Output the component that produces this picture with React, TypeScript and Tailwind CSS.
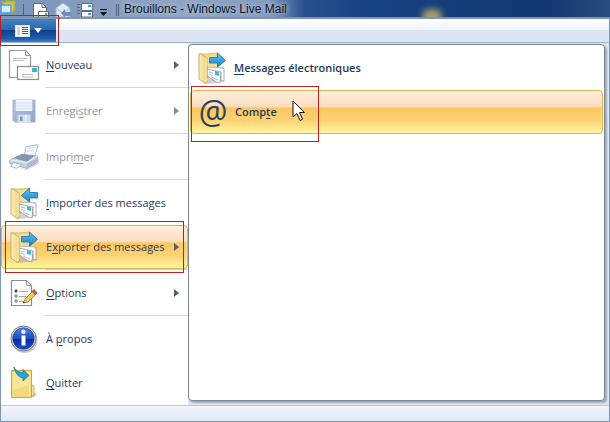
import type { ReactNode } from "react";
import clsx from "clsx";

type IconProps = { className?: string };

const FolderMail = ({ out }: { out?: boolean }) => (
  <svg width="28" height="32" viewBox="0 0 28 32">
    <defs>
      <linearGradient id="folder" x1="0" x2="1">
        <stop offset="0" stopColor="#fcf1c0" />
        <stop offset="1" stopColor="#ecd07a" />
      </linearGradient>
      <linearGradient id="arrow" x1="0" x2="0" y1="0" y2="1">
        <stop offset="0" stopColor="#62c6f6" />
        <stop offset="1" stopColor="#1482cc" />
      </linearGradient>
    </defs>
    <path d="M6 30l5 2 15-3v-3l-10-2z" fill="#9a9a9a" opacity=".45" />
    <path d="M1 2h10l8-1 1 14-10 12z" fill="#f3de92" stroke="#d0ae52" strokeWidth=".8" />
    <path d="M9 15l16 1v8l-16-1z" fill="#fff" stroke="#a3abb2" strokeWidth=".8" />
    <path d="M9 17l14 3-1 11-4-1-9-6z" fill="#fafbfc" stroke="#8f959b" strokeWidth=".8" />
    <path d="M24 16l2 .5V29l-3-.5V20" fill="#fff" stroke="#8f959b" strokeWidth=".8" />
    <path d="M17 19l4 1v4l-4-1z" fill="#48b3d8" />
    <path d="M11 20l4 1M11 22l4 2M13 25l7 3" stroke="#a9b1b8" strokeWidth=".8" />
    <path d="M1 2h2l6 4v25l-2 .5L1 27z" fill="url(#folder)" stroke="#c9a74d" strokeWidth=".9" />
    <path d="M8 6v24" stroke="#fff6cf" />
    {out ? (
      <path d="M11.500 5.500h8V1l8 7.500-8 6.500v-4h-8z" fill="url(#arrow)" stroke="#1f6dab" strokeWidth=".8" />
    ) : (
      <path d="M27.500 5.500h-8V1l-8 7.500 8 6.500v-4h8z" fill="url(#arrow)" stroke="#1f6dab" strokeWidth=".8" />
    )}
  </svg>
);

const NewMail = () => (
  <svg width="32" height="32" viewBox="0 0 32 32">
    <path d="M1.500 1.500h16l5 5v22h-21z" fill="#fff" stroke="#999" strokeWidth="1.200" />
    <path d="M17.500 1.500v5h5z" fill="#eee" stroke="#999" />
    <path d="M5 9.500h14M5 11.500h11" stroke="#bbb" />
    <rect x="9.500" y="17.500" width="21" height="13" fill="#fff" stroke="#8d8d8d" strokeWidth="1.200" />
    <path d="M24 19h5v4h-5z" fill="#40b1cb" />
    <path d="M14 25.500h11M14 28h11" stroke="#bbb" />
  </svg>
);

const Floppy = () => (
  <svg width="24" height="24" viewBox="0 0 26 26">
    <defs>
      <linearGradient id="disk" x1="0" x2="1" y1="0" y2="1">
        <stop offset="0" stopColor="#b3c0d8" />
        <stop offset="1" stopColor="#95a6c5" />
      </linearGradient>
    </defs>
    <path d="M1 1h24v24H3l-2-2z" fill="url(#disk)" stroke="#a0aecb" strokeWidth=".8" />
    <path d="M4 1h18v12H4z" fill="#edf4fc" />
    <path d="M4 4.500h18M4 7.500h18M4 10.500h18" stroke="#d2dff0" />
    <path d="M6 17h14v8H6z" fill="#cfdbee" />
    <path d="M8 18.500h4v6H8z" fill="#8797b7" stroke="#eef3fa" strokeWidth=".8" />
    <path d="M14 17h2v8h-2z" fill="#e9f0fa" />
  </svg>
);

const Printer = () => (
  <svg width="32" height="28" viewBox="0 0 34 28">
    <path d="M3 22l15 5 14-8v3l-13 6z" fill="#b0b6be" opacity=".5" />
    <path d="M17 13l2-10 13-2-4 14z" fill="#f2f7fd" stroke="#9aaccb" strokeWidth=".8" />
    <path d="M21 5l8-1.500M20 8l8-1.500" stroke="#cbd8e9" strokeWidth=".8" />
    <path d="M2 17l13-6 16 2 1 6-12 7-7-2-11-3z" fill="#c7d2e3" stroke="#8f9db9" strokeWidth=".9" />
    <path d="M6 15l9-4 13 2-8 6z" fill="#8694ae" />
    <path d="M2 17l18 3 11-7" fill="none" stroke="#eff5fd" />
    <path d="M6 20l9 2-6 4-6-2z" fill="#f7faff" stroke="#98a8c4" strokeWidth=".8" />
    <path d="M20 21v4l12-6v-4z" fill="#aab9d1" />
  </svg>
);

const OptionsIcon = () => (
  <svg width="30" height="28" viewBox="0 0 30 28">
    <path d="M2.500 1.500h15l5 5v20h-20z" fill="#fff" stroke="#8b8b8b" strokeWidth="1.200" />
    <path d="M17.500 1.500v5h5z" fill="#eee" stroke="#999" />
    <g fill="#fff" stroke="#555" strokeWidth=".9">
      <circle cx="7" cy="12" r="1.200" fill="#333" />
      <circle cx="7" cy="17" r="1.200" />
      <circle cx="7" cy="22" r="1.200" />
    </g>
    <path d="M10 12.500h9M10 17.500h7M10 22.500h7" stroke="#aaa" />
    <path d="M14 24l2-4 9-9 3 3-9 9z" fill="#f2ca5e" stroke="#8f713a" strokeWidth=".8" />
    <path d="M23 12.500l2-2 3 3-2 2z" fill="#d85b4a" stroke="#8f4a40" strokeWidth=".6" />
    <path d="M14 24l.8-1.800 1.200 1.200z" fill="#222" />
  </svg>
);

const InfoIcon = () => (
  <svg width="28" height="28" viewBox="0 0 28 28">
    <defs>
      <linearGradient id="info" x1="0" x2="0" y1="0" y2="1">
        <stop offset="0" stopColor="#4d83e0" />
        <stop offset=".5" stopColor="#1c4ec0" />
        <stop offset=".51" stopColor="#0a2aa6" />
        <stop offset="1" stopColor="#1f4cc6" />
      </linearGradient>
    </defs>
    <circle cx="14.500" cy="15" r="13" fill="#777" opacity=".4" />
    <circle cx="13.500" cy="13.500" r="12.500" fill="#e4e6ea" stroke="#70757c" />
    <circle cx="13.500" cy="13.500" r="10.800" fill="url(#info)" stroke="#12317f" strokeWidth=".6" />
    <circle cx="13.500" cy="6.700" r="2.200" fill="#fff" />
    <path d="M11.500 10.500h4v10h-4z" fill="#fff" />
  </svg>
);

const QuitIcon = () => (
  <svg width="28" height="32" viewBox="0 0 28 32">
    <path d="M20 30l3-5 4 2-3 3z" fill="#999" opacity=".5" />
    <path d="M20 17l4 2v9l-4 2z" fill="#f6e29a" stroke="#c4a143" strokeWidth=".8" />
    <path d="M1.500 3.500h20v27h-20z" fill="#f2da7c" stroke="#c9a747" />
    <path d="M2.500 4.500h18v13l-18 6z" fill="#f9e9a5" opacity=".7" />
    <path d="M19.500 18v11" stroke="#fff3bf" />
    <path d="M4 0c2 4 5 5.500 9 5.500V2.500l6 6-6 5.500v-3C10 11 5 7 4 0z" fill="#2aa2d6" stroke="#18709d" strokeWidth=".7" />
  </svg>
);

const Cursor = ({ className }: IconProps) => (
  <svg className={className} width="14" height="22" viewBox="0 0 14 22">
    <path d="M1 1v16l4-3.500 3 7 2.500-1.200L7.500 12.500H12.500z" fill="#fff" stroke="#111" />
  </svg>
);

const Chevron = ({ disabled }: { disabled?: boolean }) => (
  <svg className="ml-auto" width="5" height="8" viewBox="0 0 5 8">
    <path d="M0 0l5 4-5 4z" fill={disabled ? "#8d8d8d" : "#4c607a"} />
  </svg>
);

// Underlines the access key inside a menu label
const Label = ({ text, hotkey }: { text: string; hotkey: number }) => (
  <span>
    {text.slice(0, hotkey)}
    <u className="underline underline-offset-2">{text[hotkey]}</u>
    {text.slice(hotkey + 1)}
  </span>
);

const hot =
  "border-[#e0b34a] bg-[linear-gradient(#fdeee0_0%,#fbdcbc_38%,#fdc75f_40%,#fdd273_70%,#fff6a0_100%)] shadow-[inset_0_0_0_1px_rgba(255,245,190,0.5)]";

type Item = {
  text: string;
  hotkey: number;
  icon: ReactNode;
  disabled?: boolean;
  arrow?: boolean;
  active?: boolean;
  line?: boolean;
};

const items: Item[] = [
  { text: "Nouveau", hotkey: 0, icon: <NewMail />, arrow: true, line: true },
  { text: "Enregistrer", hotkey: 6, icon: <Floppy />, arrow: true, disabled: true, line: true },
  { text: "Imprimer", hotkey: 5, icon: <Printer />, disabled: true, line: true },
  { text: "Importer des messages", hotkey: 0, icon: <FolderMail /> },
  { text: "Exporter des messages", hotkey: 1, icon: <FolderMail out />, arrow: true, active: true, line: true },
  { text: "Options", hotkey: 0, icon: <OptionsIcon />, arrow: true, line: true },
  { text: "À propos", hotkey: 2, icon: <InfoIcon /> },
  { text: "Quitter", hotkey: 0, icon: <QuitIcon /> },
];

const MenuItem = ({ text, hotkey, icon, disabled, arrow, active, line }: Item) => (
  <li className="relative">
    <button
      disabled={disabled}
      className={clsx(
        "flex h-11 w-full items-center rounded-sm border pr-2 pl-1 text-left",
        active ? hot : "border-transparent",
        disabled ? "text-[#959595]" : "text-[#1e395b]"
      )}
    >
      <span className="mr-1 flex w-9 shrink-0 justify-center">{icon}</span>
      <Label text={text} hotkey={hotkey} />
      {arrow && <Chevron disabled={disabled} />}
    </button>
    {line && <div className="ml-11 h-0.5 border-t border-[#cbd8e8]" />}
    {active && <div className="pointer-events-none absolute -top-1 right-1 left-1 h-13 border border-[#b8201f]" />}
  </li>
);

const TitleBar = () => (
  <header className="flex h-[17px] items-center overflow-hidden bg-[linear-gradient(90deg,#7b93b8_0%,#8fa5c4_30%,#8299bd_44%,#28508c_50%,#174282_60%,#12386f_90%,#294d80_100%)]">
    <svg className="shrink-0" width="120" height="17" viewBox="0 0 120 17">
      <g strokeWidth="1.500">
        <path d="M5 1h10v9H5z" fill="#c9e7a2" stroke="#86b341" />
        <path d="M3 3h10v9H3z" fill="#ffe6a0" stroke="#f2a51c" />
        <path d="M1 5h10v8H1z" fill="#cdeaff" stroke="#4b9fd9" />
      </g>
      <path d="M3 10l3-3 3 3" fill="none" stroke="#fff" />
      <path d="M23.500 4v11M116.500 4v12M118.500 4v12" stroke="#50617c" />
      <path d="M33.500 3.500h9l4 4V17h-13z" fill="#fff" stroke="#606a76" />
      <path d="M42 3.500v4h4" fill="none" stroke="#606a76" />
      <path d="M38.500 11.500h10V17h-10z" fill="#fff" stroke="#606a76" />
      <path d="M45 13h2v2h-2z" fill="#39acc4" />
      <path d="M56 8l7-5 7 5v9H56z" fill="#e1eaf5" stroke="#a8b8ce" />
      <path d="M56 8l7 5 7-5" fill="none" stroke="#a8b8ce" />
      <path d="M61 13l4-4v3h6v4h-6v2z" fill="#6d8fbd" />
      <path d="M81.500 3.500h11v7h-11zM81.500 11.500h11V17h-11z" fill="#fff" stroke="#606a76" />
      <path d="M88 5h3v2h-3zM88 13h3v2h-3z" fill="#39acc4" />
      <path d="M77 4.500h3M77 7.500h3M77 10.500h3M77 13.500h3" stroke="#606a76" />
      <path d="M100 9.500h7" stroke="#111" />
      <path d="M100 12h7l-3.500 4z" fill="#111" />
    </svg>
    <h1 className="pl-1 font-['Liberation_Sans',sans-serif] text-[12px] leading-4 whitespace-nowrap text-[#0d1420] [text-shadow:0_0_6px_#b5c5dc,0_0_4px_#b5c5dc]">
      Brouillons - Windows Live Mail
    </h1>
    <div className="ml-[135px] h-4 w-5 translate-y-2 rounded-full bg-[#c9b967] opacity-80 blur-[3px]" />
  </header>
);

export default function App() {
  return (
    <div className="relative font-['Open_Sans',sans-serif] text-[11px] leading-4">
      <TitleBar />
      <div className="border-x border-t-2 border-b border-[#7f94b2] bg-[#dce6f4]">
        <div className="relative h-6 border-b border-[#9fb2cc] bg-[linear-gradient(#ffffff_0%,#eef5fc_46%,#dce6f4_50%)]">
          <button
            aria-label="Menu"
            className="flex h-full w-[55px] items-center gap-1 bg-[linear-gradient(#4480c0_0%,#2a66b0_48%,#103f8c_50%,#1e5cac_85%,#3584c8_100%)] pl-3.5"
          >
            <svg width="15" height="12" viewBox="0 0 15 12">
              <rect x=".5" y=".5" width="14" height="11" fill="#fff" stroke="#d9e5f4" />
              <path d="M2 2h3v8H2z" fill="#c9d6e5" />
              <path d="M7 2.500h6M7 4.500h6M7 6.500h6M7 8.500h6" stroke="#2b5c9c" />
            </svg>
            <svg width="8" height="5" viewBox="0 0 8 5">
              <path d="M0 0h8L4 5z" fill="#fff" />
            </svg>
          </button>
          <div className="pointer-events-none absolute -top-1 -left-px h-[31px] w-[59px] border border-[#b8201f]" />
        </div>

        <main className="flex bg-white">
          <nav className="w-[187px] shrink-0">
            <ul>
              {items.map((item) => (
                <MenuItem key={item.text} {...item} />
              ))}
            </ul>
          </nav>

          <section className="flex flex-1 bg-[#dfe8f5] pt-px pr-1 pb-1">
            <ul className="flex-1 rounded-sm border border-[#7d8794] bg-white p-px font-semibold text-[#1e395b] shadow-[2px_2px_2px_#9ca8b6]">
              <li>
                <button className="flex h-11 w-full items-center pl-2 text-left">
                  <span className="mr-2 flex w-7 justify-center">
                    <FolderMail out />
                  </span>
                  <Label text="Messages électroniques" hotkey={0} />
                </button>
              </li>
              <li className="relative">
                <button className={clsx("flex h-11 w-full items-center rounded-sm border pl-2 text-left", hot)}>
                  <span className="mr-2 flex w-7 justify-center text-[32px] leading-8 font-medium text-[#2b4156]">
                    @
                  </span>
                  <Label text="Compte" hotkey={4} />
                </button>
                <div className="pointer-events-none absolute -top-1 left-px h-14 w-32 border border-[#b8201f]" />
                <Cursor className="pointer-events-none absolute top-2.5 left-[102px]" />
              </li>
            </ul>
          </section>
        </main>

        <footer className="h-4 border-t border-[#b8c7da] bg-[linear-gradient(#f3f7fd,#dfe8f7)]" />
      </div>
    </div>
  );
}
